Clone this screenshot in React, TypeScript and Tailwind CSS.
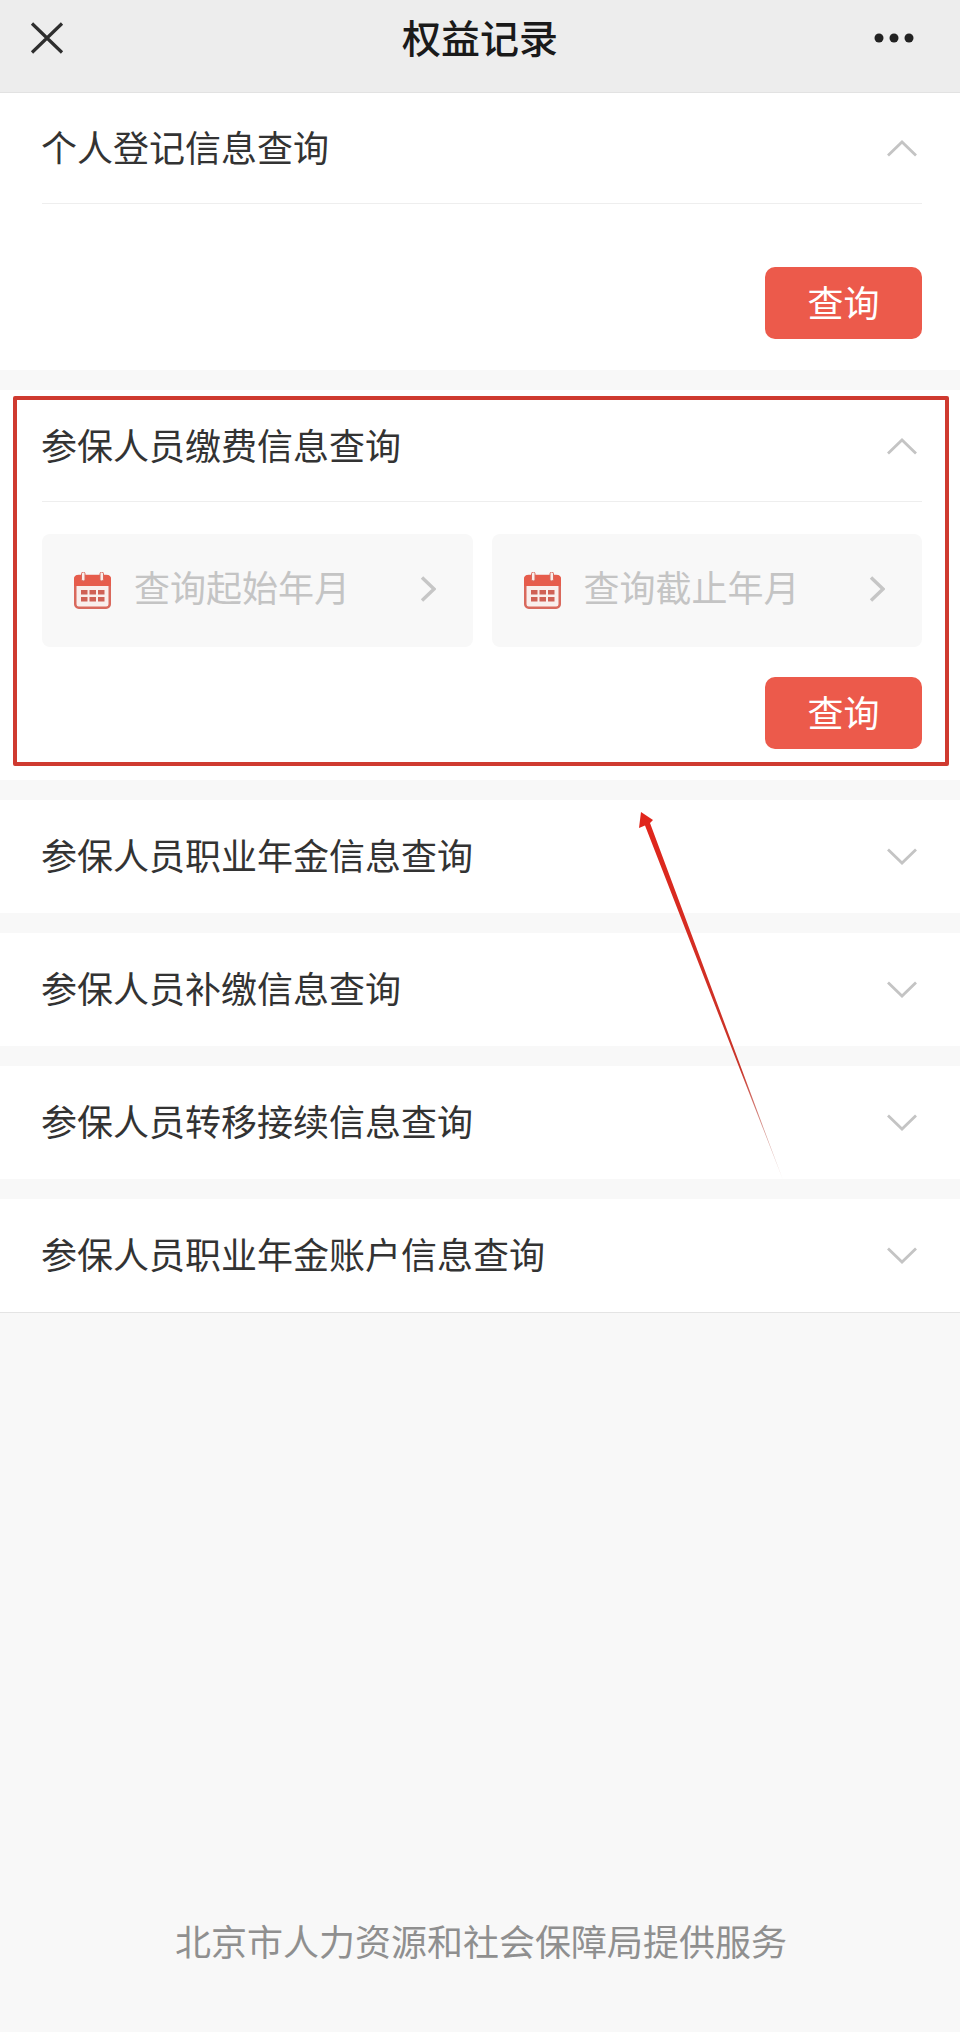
import React from 'react';

const Chevron = ({ up }: { up?: boolean }) => (
  <svg width="30" height="17" viewBox="0 0 30 17" fill="none" className="mr-[5px]">
    <polyline
      points={up ? '1,15.5 15,2 29,15.5' : '1,1.5 15,15 29,1.5'}
      stroke="#c4c4c4"
      strokeWidth="2.8"
    />
  </svg>
);

const CalendarIcon = () => (
  <svg width="37" height="37" viewBox="0 0 37 37" className="shrink-0">
    <rect x="1.25" y="4" width="34.5" height="31.75" rx="3.5" fill="#f9eeec" stroke="#d9695d" strokeWidth="2.5" />
    <path d="M0 7a4 4 0 0 1 4-4h29a4 4 0 0 1 4 4v7H0z" fill="#e65c4c" />
    <rect x="7.5" y="0" width="3.5" height="9" rx="1.75" fill="#f9eeec" stroke="#d9695d" strokeWidth="1" />
    <rect x="26" y="0" width="3.5" height="9" rx="1.75" fill="#f9eeec" stroke="#d9695d" strokeWidth="1" />
    <g fill="#cf6156">
      <rect x="7" y="18" width="6.5" height="4.5" />
      <rect x="15.5" y="18" width="6.5" height="4.5" />
      <rect x="24" y="18" width="6.5" height="4.5" />
      <rect x="7" y="25" width="6.5" height="4.5" />
      <rect x="15.5" y="25" width="6.5" height="4.5" />
      <rect x="24" y="25" width="6.5" height="4.5" />
    </g>
  </svg>
);

const DateField = ({ label }: { label: string }) => (
  <div className="flex h-[113px] items-center rounded-lg bg-[#f8f8f8] pl-[32px] pr-[37px]">
    <CalendarIcon />
    <span className="mb-[10px] ml-[23px] flex-1 text-[36px] text-[#c4c4c4]">{label}</span>
    <svg width="16" height="26" viewBox="0 0 16 26" fill="none" className="mb-[3px]">
      <polyline points="2,1.5 14,13 2,24.5" stroke="#c6c6c6" strokeWidth="3.4" />
    </svg>
  </div>
);

const QueryButton = () => (
  <div className="flex justify-end">
    <button className="h-[72px] w-[157px] rounded-[10px] bg-[#ec5a4b] pb-[5px] text-[36px] text-white">查询</button>
  </div>
);

const SectionHead = ({ title, open }: { title: string; open?: boolean }) => (
  <div className={`flex items-center justify-between ${open ? 'h-[111px] border-b border-[#eeeeee]' : 'h-[113px]'}`}>
    <span className="-ml-[1px] mb-[5px] text-[36px] text-[#333333]">{title}</span>
    <Chevron up={open} />
  </div>
);

const collapsed = ['参保人员职业年金信息查询', '参保人员补缴信息查询', '参保人员转移接续信息查询', '参保人员职业年金账户信息查询'];

export default function App() {
  return (
    <div className="relative flex min-h-[2032px] flex-col bg-[#f8f8f8] font-['Noto_Sans_CJK_SC','Noto_Sans',sans-serif]">
      {/* title bar */}
      <div className="flex h-[93px] items-center justify-between border-b border-[#e2e2e2] bg-[#ededed] pb-[17px] pl-[30px] pr-[43px]">
        <div className="w-[44px]">
          <svg width="34" height="32" viewBox="0 0 34 32" fill="none">
            <path d="M2 1.5 32 30.5M32 1.5 2 30.5" stroke="#2e2e2e" strokeWidth="3.2" />
          </svg>
        </div>
        <span className="mb-[2px] ml-[13px] text-[39px] font-medium text-[#1a1a1a]">权益记录</span>
        <svg width="44" height="10" viewBox="0 0 44 10">
          <circle cx="6" cy="5" r="4.5" fill="#222222" />
          <circle cx="21" cy="5" r="4.5" fill="#222222" />
          <circle cx="36" cy="5" r="4.5" fill="#222222" />
        </svg>
      </div>

      <section className="bg-white pb-[31px] pl-[42px] pr-[38px]">
        <SectionHead title="个人登记信息查询" open />
        <div className="mt-[63px]">
          <QueryButton />
        </div>
      </section>

      <section className="mt-[20px] bg-white pb-[31px] pl-[42px] pr-[38px]">
        <div className="pt-[1px]">
          <SectionHead title="参保人员缴费信息查询" open />
        </div>
        <div className="mt-[32px] grid grid-cols-2 gap-[19px]">
          <DateField label="查询起始年月" />
          <DateField label="查询截止年月" />
        </div>
        <div className="mt-[30px]">
          <QueryButton />
        </div>
      </section>

      <div className="mt-[20px] flex flex-col gap-[20px]">
        {collapsed.map((title, i) => (
          <section
            key={title}
            className={`bg-white pl-[42px] pr-[38px] ${i === collapsed.length - 1 ? 'border-b border-[#e4e4e4]' : ''}`}
          >
            <SectionHead title={title} />
          </section>
        ))}
      </div>

      <div className="mt-auto pb-[72px] pl-[2px] text-center text-[36px] leading-[40px] text-[#8f8f8f]">
        北京市人力资源和社会保障局提供服务
      </div>

      {/* annotation drawn over the screenshot */}
      <div className="absolute left-[13px] top-[396px] h-[370px] w-[936px] rounded-[2px] border-[4px] border-[#cf3a30]" />
      <svg className="absolute left-[630px] top-[805px]" width="165" height="385" viewBox="0 0 165 385">
        <defs>
          <linearGradient id="tail" x1="11" y1="7" x2="153" y2="375" gradientUnits="userSpaceOnUse">
            <stop offset="0" stopColor="#e1251b" />
            <stop offset="0.7" stopColor="#c9352a" />
            <stop offset="1" stopColor="#c9a59f" stopOpacity="0.5" />
          </linearGradient>
        </defs>
        <polygon points="11,7 9,23 15,20.5 153,375 20,18 23,15" fill="url(#tail)" />
      </svg>
    </div>
  );
}
